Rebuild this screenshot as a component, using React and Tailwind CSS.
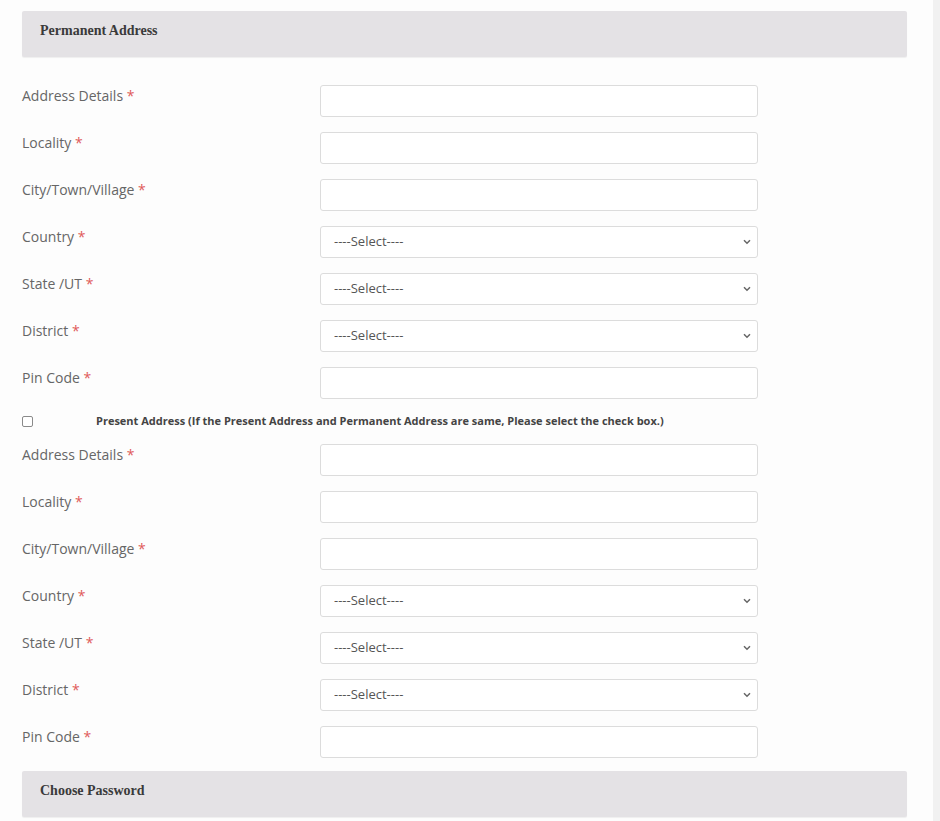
import React from 'react'

// ── Field definitions ────────────────────────────────────────────────────────
const FIELDS = [
  { label: 'Address Details', type: 'text' },
  { label: 'Locality', type: 'text' },
  { label: 'City/Town/Village', type: 'text' },
  { label: 'Country', type: 'select' },
  { label: 'State /UT', type: 'select' },
  { label: 'District', type: 'select' },
  { label: 'Pin Code', type: 'text' },
]

function SectionHeader({ title }) {
  return (
    <div className="h-[46px] bg-[#e4e2e5] rounded-[2px] flex items-start pt-[11px] px-[18px] shadow-[0_1px_1px_rgba(0,0,0,0.06)]">
      <span className="font-['Liberation_Serif',serif] font-bold text-[14px] leading-[18px] text-[#3a3a3a]">{title}</span>
    </div>
  )
}

function Chevron() {
  return (
    <svg width="8" height="6" viewBox="0 0 8 6" className="absolute right-[7px] top-[13px] pointer-events-none">
      <path d="M1 1.2l3 3 3-3" fill="none" stroke="#666" strokeWidth="1.5" />
    </svg>
  )
}

function FieldRow({ label, type }) {
  return (
    <div className="flex items-start">
      <label className="w-[298px] pt-[1px] leading-5 text-[14px] text-[#666] font-['Open_Sans',sans-serif]">
        {label} <span className="text-[#e05a5a]">*</span>
      </label>
      {type === 'select' ? (
        <div className="relative w-[438px] h-[32px]">
          <select className="appearance-none w-full h-full border border-[#dcdcdc] rounded-[3px] bg-white pl-[13px] text-[13px] text-[#555] font-['Open_Sans',sans-serif] outline-none">
            <option>----Select----</option>
          </select>
          <Chevron />
        </div>
      ) : (
        <input type="text" className="w-[438px] h-[32px] border border-[#dcdcdc] rounded-[3px] bg-white outline-none" />
      )}
    </div>
  )
}

function AddressFields() {
  return (
    <div className="flex flex-col gap-[15px]">
      {FIELDS.map(f => <FieldRow key={f.label} {...f} />)}
    </div>
  )
}

export default function App() {
  return (
    <div className="flex w-[940px] h-[821px] overflow-hidden bg-[#fdfdfd]">
      <div className="flex-1 pl-[22px] pr-[26px] pt-[11px]">
        <SectionHeader title="Permanent Address" />

        <div className="mt-[28px]">
          <AddressFields />
        </div>

        {/* Same-as-permanent checkbox */}
        <div className="flex items-center h-[16px] mt-[14px] mb-[15px]">
          <span className="w-[11px] h-[11px] border border-[#8a8a8a] rounded-[2px] bg-white" />
          <span className="ml-[63px] text-[11px] font-bold text-[#444] font-['Open_Sans',sans-serif]">
            Present Address (If the Present Address and Permanent Address are same, Please select the check box.)
          </span>
        </div>

        <AddressFields />

        <div className="mt-[13px]">
          <SectionHeader title="Choose Password" />
        </div>
      </div>
      <div className="w-[7px] bg-[#f1f1f1]" />
    </div>
  )
}
